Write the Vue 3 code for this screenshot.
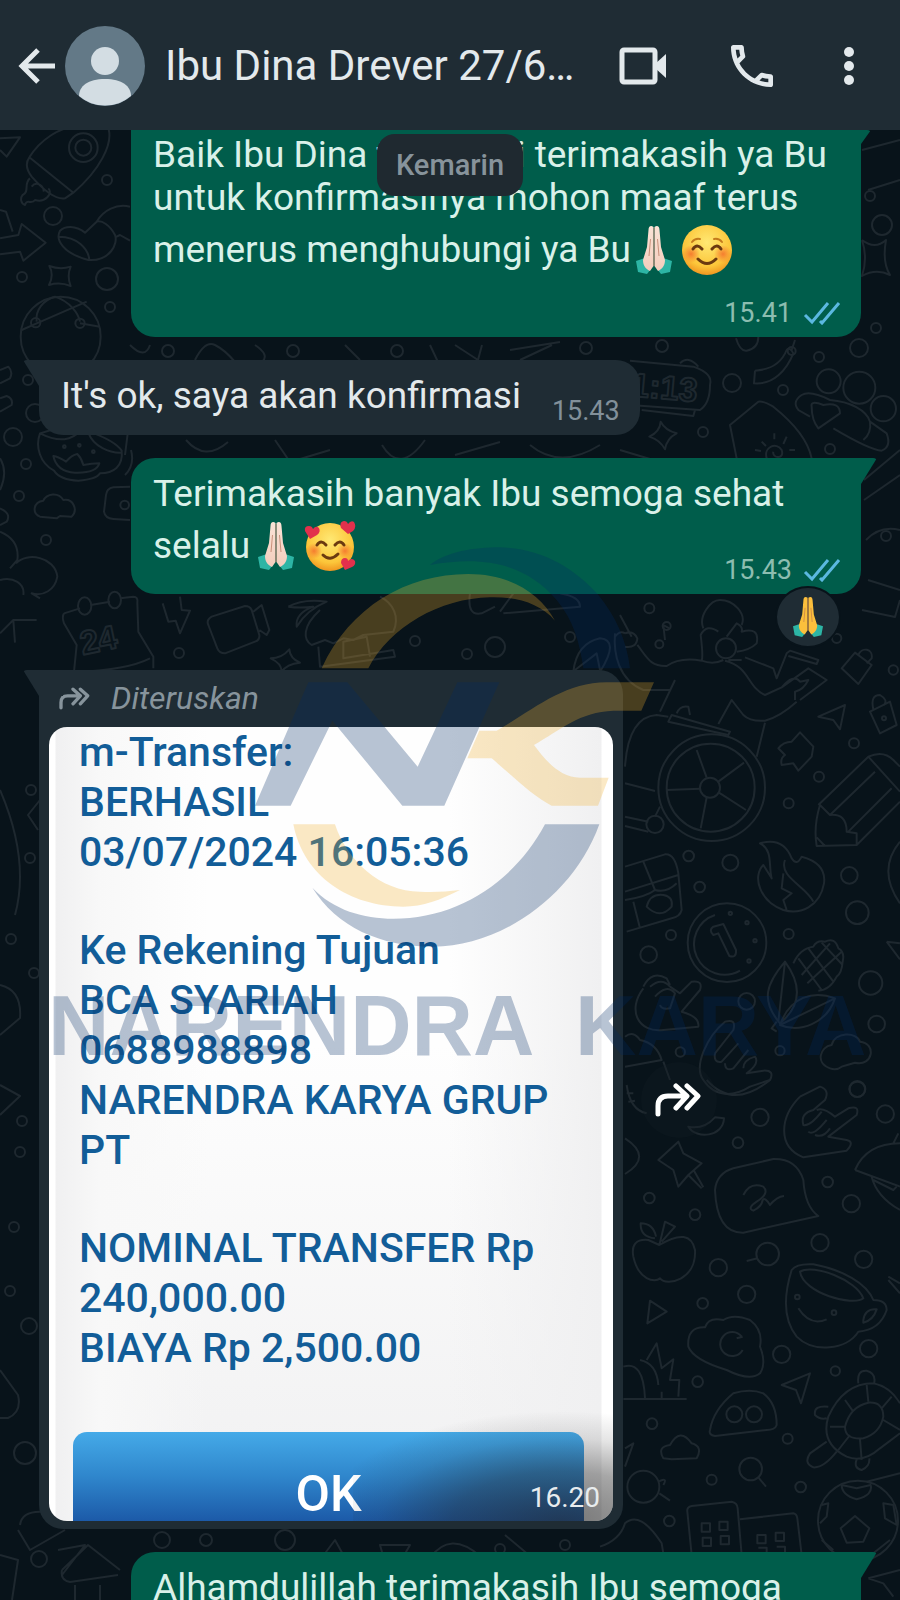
<script setup>
const receipt = [
  ['m-Transfer:', 'BERHASIL', '03/07/2024 16:05:36'],
  ['Ke Rekening Tujuan', 'BCA SYARIAH', '0688988898', 'NARENDRA KARYA GRUP', 'PT'],
  ['NOMINAL TRANSFER Rp', '240,000.00', 'BIAYA Rp 2,500.00'],
]

const rings = [
  [22, 277, 5], [53, 216, 9], [107, 180, 5], [107, 279, 11], [110, 307, 5], [28, 380, 5], [35, 413, 9],
  [13, 437, 9], [26, 464, 5], [19, 496, 5], [46, 540, 5], [168, 351, 6], [293, 351, 6], [397, 351, 6],
  [586, 348, 6], [662, 346, 6], [732, 383, 9], [783, 390, 5], [859, 348, 9], [819, 357, 5], [703, 432, 5],
  [830, 449, 5], [882, 225, 10], [870, 196, 5], [876, 328, 5], [179, 653, 5], [415, 641, 5], [467, 654, 5], [495, 647, 10],
  [570, 637, 5], [886, 536, 5], [31, 790, 5], [30, 858, 5], [11, 939, 5], [34, 973, 5], [22, 1121, 5],
  [20, 1152, 5], [14, 1227, 5], [10, 1291, 5], [29, 1326, 8], [25, 1453, 11], [39, 1559, 8], [206, 1540, 6],
  [565, 1545, 5], [500, 1549, 5], [162, 1540, 8], [285, 1540, 10],
]
</script>

<template>
  <div class="screen">
    <svg class="defs" width="0" height="0" aria-hidden="true">
      <defs>
        <linearGradient id="skin" x1="0" x2="0" y1="0" y2="1">
          <stop offset="0" stop-color="#fbe3d6" />
          <stop offset="1" stop-color="#f3cdbd" />
        </linearGradient>
        <radialGradient id="face" cx=".5" cy=".35" r=".68">
          <stop offset="0" stop-color="#ffe873" />
          <stop offset=".7" stop-color="#fcc63a" />
          <stop offset="1" stop-color="#ee8e1c" />
        </radialGradient>
        <radialGradient id="blush">
          <stop offset="0" stop-color="#f4702c" stop-opacity=".85" />
          <stop offset="1" stop-color="#f4702c" stop-opacity="0" />
        </radialGradient>
        <symbol id="hands" viewBox="0 0 36 50">
          <path d="M0 36 L9 33 L15 44 L11 49 L2 47 Z M36 36 L27 33 L21 44 L25 49 L34 47 Z" fill="#2db5a5" />
          <path class="palm" d="M17.500 2 C15 0 12.500 1 12.500 5 L11 22 L7 35 C7 41 10 44 14 46 L17.500 41 Z" />
          <path class="palm" d="M18.500 2 C21 0 23.500 1 23.500 5 L25 22 L29 35 C29 41 26 44 22 46 L18.500 41 Z" />
          <path d="M18 3 V41 M14.500 14 L13 31 M21.500 14 L23 31" fill="none" stroke="#b06a50" stroke-width="1" opacity=".65" />
        </symbol>
        <symbol id="tick" viewBox="0 0 38 24">
          <path d="M2 14 L9 21 L25 2 M17 20 L19 22 L36 2" fill="none" stroke="#5bb8e0" stroke-width="3" />
        </symbol>
        <symbol id="forward" viewBox="0 0 48 34">
          <path d="M3 31 V23 Q3 13 13 13 H31 M21 3 L32 13 L21 25 M32 3 L43 13 L32 25" fill="none" stroke="currentColor" stroke-width="5" stroke-linecap="round" stroke-linejoin="round" />
        </symbol>
      </defs>
    </svg>

    <header class="bar">
      <button class="icon back" aria-label="Kembali">
        <svg width="38" height="38" viewBox="0 0 38 38"><path d="M37 19 H4 M20 3 L4 19 L20 35" fill="none" stroke="currentColor" stroke-width="5" /></svg>
      </button>
      <svg class="avatar" width="80" height="80" viewBox="0 0 80 80" aria-hidden="true">
        <circle cx="40" cy="40" r="40" fill="#637987" />
        <circle cx="40" cy="35" r="14" fill="#d3dde3" />
        <path d="M14 70 C14 60 23 53 40 53 S66 60 66 70 A40 40 0 0 1 14 70 Z" fill="#d3dde3" />
      </svg>
      <h1 class="name">Ibu Dina Drever 27/6…</h1>
      <button class="icon video" aria-label="Panggilan video">
        <svg width="48" height="40" viewBox="0 0 48 40"><rect x="3" y="4" width="33" height="32" rx="2" fill="none" stroke="currentColor" stroke-width="5" /><path d="M36 18 L47 8 V32 L36 22 Z" fill="currentColor" /></svg>
      </button>
      <button class="icon call" aria-label="Panggilan suara">
        <svg width="42" height="42" viewBox="3 3 18 18"><path d="M6.54 5c.06.89.21 1.76.45 2.59l-1.2 1.2c-.41-1.2-.67-2.47-.76-3.79h1.51m9.86 12.02c.85.24 1.72.39 2.6.45v1.49c-1.32-.09-2.59-.35-3.8-.75l1.2-1.19M7.5 3H4c-.55 0-1 .45-1 1 0 9.390 7.610 17 17 17 .55 0 1-.45 1-1v-3.490c0-.55-.45-1-1-1-1.240 0-2.450-.2-3.570-.57-.1-.04-.21-.05-.31-.05-.26 0-.51.1-.71.290l-2.200 2.200c-2.830-1.450-5.150-3.760-6.590-6.590l2.200-2.200c.28-.28.36-.67.25-1.020C8.700 6.450 8.500 5.250 8.500 4c0-.55-.45-1-1-1z" /></svg>
      </button>
      <button class="icon more" aria-label="Menu">
        <svg width="12" height="38" viewBox="0 0 12 38"><circle cx="6" cy="5" r="5" /><circle cx="6" cy="19" r="5" /><circle cx="6" cy="33" r="5" /></svg>
      </button>
    </header>

    <main class="chat">
      <svg class="wall" viewBox="0 130 900 1470" preserveAspectRatio="xMidYMin slice" aria-hidden="true">
        <circle v-for="(r, i) in rings" :key="i" :cx="r[0]" :cy="r[1]" :r="r[2]" />
        <g transform="translate(0 120) scale(.33333)" class="thick">
          <path d="M88 112 C120 60 180 20 230 20 M88 112 L220 218 C300 150 340 70 325 25 M88 112 C75 130 80 150 95 170 C130 210 165 240 195 235 L220 218 M90 175 C70 190 90 215 68 225 C60 235 62 250 75 255 C80 235 95 255 105 240 C135 250 160 220 145 205 M95 200 C110 180 135 200 130 215" />
          <circle cx="250" cy="83" r="43" /><circle cx="250" cy="83" r="24" />
          <path d="M0 55 L60 52 L20 110 L0 90 M0 270 L18 275 L38 335 M0 355 L55 345 L65 312 L137 368 L70 422 L60 395 L0 403" />
          <path d="M180 332 C165 360 190 400 265 420 C330 425 355 370 345 345 C330 315 305 300 290 305 L255 338 C225 315 195 318 180 332 Z M178 350 C230 350 265 385 268 420 M290 305 C310 270 350 250 390 260 M345 352 L360 345 L390 362" />
          <path d="M148 438 Q180 450 212 440 Q200 468 212 498 Q180 485 147 495 Q163 465 148 438 Z" />
          <circle cx="182" cy="650" r="120" /><path d="M110 605 C105 570 130 540 165 530 C210 545 235 580 240 605 M65 630 L110 610 L260 545 M240 610 L300 620" /><circle cx="107" cy="608" r="14" /><circle cx="240" cy="610" r="14" />
          <path d="M0 750 L25 740 Q40 755 30 775 L0 790 M0 835 L20 828 Q40 835 35 855 L0 875 M275 835 C300 870 310 890 290 915 C265 935 220 915 225 880 C235 855 260 850 275 835 Z M243 915 C240 880 265 870 272 895 C278 910 270 918 262 922" />
          <path d="M120 940 C160 925 210 920 245 930 L258 915 L268 935 C310 950 350 970 365 992 C370 1040 340 1060 300 1060 Q290 1078 235 1082 Q180 1080 162 1052 C120 1030 105 980 120 940 Z C180 970 215 960 245 930 M265 938 C280 980 330 1000 365 998 M160 1008 Q175 1010 198 1025 Q215 1005 232 1002 Q245 1015 250 1035 Q275 1030 298 1030 Q290 1060 225 1058 Q170 1055 160 1008 Z" />
          <circle cx="193" cy="980" r="4" /><circle cx="238" cy="976" r="4" /><circle cx="280" cy="995" r="4" />
          <path d="M120 1190 C95 1180 100 1145 130 1142 C140 1120 175 1115 190 1140 C220 1135 235 1170 215 1190 L180 1188 L170 1195 Z M390 1100 L340 1102 Q320 1105 318 1125 L312 1175 Q315 1195 340 1197 L390 1200" />
          <circle cx="374" cy="1155" r="13" /><path d="M0 1015 Q25 1055 0 1110 M0 1165 Q35 1180 20 1205 L0 1215 M0 1235 Q60 1260 52 1320 L30 1345 M48 1330 C80 1295 165 1310 172 1370 C165 1410 130 1430 95 1420 L120 1435 M0 1380 C40 1370 75 1390 70 1425 M0 1540 L40 1500 L110 1500 M40 1500 L45 1568" />
        </g>
        <g transform="translate(0 590) scale(.33333)" class="thick">
          <path d="M192 70 L240 55 M272 45 L330 35 M360 25 L400 20 Q415 20 412 40 L415 125 L460 200 V235 M192 70 Q185 80 192 100 L230 165 L222 245 M235 245 Q380 240 450 205" />
          <ellipse cx="254" cy="48" rx="20" ry="26" /><ellipse cx="344" cy="30" rx="19" ry="25" />
          <text x="248" y="195" transform="rotate(-12 248 195)">24</text>
          <path d="M488 40 L505 95 L527 92 L540 130 L570 62 L545 60 L540 20 M625 105 Q618 90 635 80 L735 48 Q750 48 755 60 L778 135 Q780 150 765 155 L675 190 Q658 190 652 175 Z M760 65 L785 45 L808 120 L800 135 L778 120" />
          <path d="M812 205 Q845 205 868 178 Q870 205 900 218 Q860 222 845 245 Q845 220 812 205 Z M865 50 Q910 25 980 35 Q920 60 890 110 Q885 70 940 50 Q900 55 865 50 M960 60 C905 110 910 150 935 165 L975 150 L1000 160 L1030 145 L1060 150 L1090 135 L1180 125 C1200 80 1180 40 1140 20 M955 170 L960 230 L1185 200 L1180 180 L1030 205 V155 L1100 140 L1110 200" />
          <path d="M1410 10 Q1400 80 1445 70 L1485 50 M1500 65 L1540 10 M1510 70 L1740 50 Q1740 20 1680 10 M1720 245 Q1730 160 1800 145 Q1860 150 1800 245 M1725 240 L1790 190 L1800 240" />
        </g>
        <g transform="translate(630 330) scale(.33333)" class="thick">
          <path d="M0 92 L190 110 Q250 130 240 165 Q240 220 210 240 L0 225 M150 100 Q175 75 205 110 M35 240 L190 258 L195 240" />
          <text x="0" y="198" transform="rotate(5 0 198)">1:13</text>
          <path d="M318 25 Q330 65 350 62 Q385 55 385 20 M495 30 L485 60 M375 122 L372 160 C430 165 470 120 490 70 Q480 50 470 60 C450 110 410 120 375 122" />
          <circle cx="485" cy="63" r="12" />
          <path d="M92 275 Q105 300 140 310 Q110 325 105 358 Q90 330 58 320 Q90 305 92 275 Z M320 385 L300 285 L385 215 Q400 212 430 230 Q530 310 545 385 M395 335 L408 348 M433 310 V328 M470 320 L460 342 M375 360 L393 363 M478 360 H495 M410 385 C400 350 440 335 455 360 C465 390 425 385 430 365" />
          <circle cx="596" cy="154" r="36" /><circle cx="688" cy="173" r="48" /><circle cx="760" cy="236" r="38" />
          <path d="M540 260 L505 240 Q485 215 515 195 Q540 180 600 210 C660 215 710 240 720 275 L770 310 Q785 350 755 362 Q720 360 610 295 M720 275 Q725 310 700 330 M545 230 Q540 210 580 225 Q630 215 630 250 L565 295 Q545 270 545 230 Z" />
        </g>
        <g transform="translate(600 600) scale(.33333)" class="thick">
          <path d="M60 45 L95 110 M45 100 C40 160 55 240 130 270 L210 270 M45 110 Q60 90 75 100 M75 100 Q100 90 112 115 Q110 145 75 140 M112 135 C140 170 150 200 200 198 Q240 170 305 182 M225 240 L180 335 M190 75 L195 120 M190 75 L208 85" />
          <circle cx="178" cy="133" r="12" /><circle cx="200" cy="78" r="12" /><circle cx="378" cy="145" r="30" />
          <path d="M310 85 C295 50 330 0 360 0 C400 0 440 40 425 75 M355 95 Q320 70 302 105 Q310 170 305 182 Q340 195 370 180 M380 110 L410 70 Q430 80 425 95 Q480 80 470 130 Q450 150 410 155 M385 180 L425 180 M435 172 L520 205 L530 235 L560 160 L570 152 L655 180 L650 192 L565 168 M375 182 C450 200 440 260 495 285 L545 262 L625 205 L680 240 L600 300 M545 262 Q580 220 600 245 L625 240 Q610 270 585 275 L585 300 M355 372 L395 300 L430 345 Q450 365 495 362 Q540 350 590 305 M495 368 L470 470 M215 345 L390 395 L385 405 L205 365 Z M230 340 Q240 315 265 320 L270 345 M75 500 Q85 350 170 345 L205 350 M75 550 L165 573 M75 650 L145 665 M75 678 L145 695 M165 650 L180 620" />
          <circle cx="335" cy="563" r="160" /><circle cx="332" cy="563" r="132" /><circle cx="330" cy="563" r="30" /><circle cx="165" cy="673" r="26" />
          <path d="M290 450 L320 533 M355 545 L432 488 M357 578 L438 630 M320 592 L302 685 M300 566 L200 570" />
          <path d="M725 205 L765 158 L815 195 L775 252 Z M775 165 C785 140 820 145 815 175 L800 190 M655 350 L735 315 L720 388 L700 360 Z M810 335 L870 305 L890 375 L840 400 Z M820 328 Q810 285 840 285 Q865 300 852 315 M600 397 L640 440 L635 470 L595 512 L580 490 L545 495 Q540 475 555 465 L535 445 Q550 425 575 425 Z" />
          <circle cx="852" cy="355" r="6" /><circle cx="880" cy="210" r="14" /><circle cx="762" cy="430" r="15" /><circle cx="657" cy="530" r="15" /><circle cx="566" cy="610" r="15" /><circle cx="710" cy="115" r="14" /><circle cx="148" cy="25" r="15" />
          <path d="M655 615 L805 470 Q850 450 880 480 L900 500 M805 470 L900 575 M825 515 L690 645 M875 565 L745 695 M900 605 L770 735 L650 738 Q640 680 660 615 L690 645 Q740 640 740 695 L770 700 V735 M650 712 L675 738" />
          <path d="M480 730 Q550 710 575 775 Q590 800 605 770 Q680 790 672 850 C660 920 600 945 550 930 C480 905 455 830 490 795 L515 835 C505 800 520 750 480 730 Z M555 780 C535 830 620 860 640 905 M550 820 L545 865 L575 880 L550 900 L560 930" />
          <path d="M75 800 L195 763 Q225 760 235 820 L245 930 Q240 950 215 955 L80 995 M75 875 L235 825 M130 785 L165 870 M75 900 Q140 890 165 870 Q200 880 230 850 M100 905 L120 985 M140 920 Q180 960 215 920 Q220 890 190 885 Q150 880 140 920 Z" />
          <circle cx="266" cy="768" r="16" /><circle cx="391" cy="788" r="24" /><circle cx="299" cy="861" r="16" /><circle cx="748" cy="826" r="25" /><circle cx="772" cy="938" r="34" /><circle cx="566" cy="1002" r="15" /><circle cx="213" cy="1005" r="15" /><circle cx="146" cy="1064" r="25" /><circle cx="812" cy="1149" r="35" /><circle cx="830" cy="1272" r="25" /><circle cx="440" cy="1204" r="25" /><circle cx="241" cy="1356" r="14" /><circle cx="540" cy="1352" r="14" /><circle cx="772" cy="1468" r="23" />
          <circle cx="381" cy="1028" r="118" /><path d="M420 1112 A92 92 0 1 1 345 945 M340 980 L370 972 L408 1050 Q410 1075 388 1068 L355 1000 L340 1005 Q325 990 340 980 Z" />
          <circle cx="391" cy="940" r="5" /><circle cx="441" cy="968" r="5" /><circle cx="465" cy="1022" r="5" /><circle cx="447" cy="1083" r="5" />
          <path d="M900 725 Q830 810 900 910 M860 1025 L900 1030 M860 1025 L900 1078" />
          <path d="M580 1090 Q600 1045 640 1040 Q650 1020 675 1025 Q705 1010 715 1045 Q735 1055 728 1085 Q725 1120 710 1130 Q690 1170 655 1172 M595 1075 L665 1170 M625 1045 L700 1145 M665 1028 L728 1095 M605 1125 L690 1030 M622 1150 L725 1055 M555 1085 C500 1150 480 1200 540 1270 C600 1220 610 1160 555 1085 Z L535 1265 M540 1275 C570 1190 640 1170 705 1195 C680 1270 600 1300 540 1275 L705 1195 M530 1265 L515 1285 L530 1295" />
          <path d="M130 1160 Q155 1110 200 1135 L210 1155 M150 1160 Q185 1130 210 1160 M165 1190 Q200 1150 225 1180 L210 1225 Q185 1230 180 1215 M130 1165 C80 1230 115 1300 190 1290 L295 1280 Q300 1250 245 1235 L300 1170 Q310 1140 275 1145 L240 1180 L210 1160" />
          <path d="M345 1360 L400 1290 Q410 1255 375 1265 C320 1310 280 1400 310 1440 C350 1500 410 1485 450 1460 L510 1440 Q525 1410 490 1412 L440 1420 Q480 1390 465 1370 Q430 1380 430 1405 M345 1360 Q340 1390 365 1385 L415 1330 M375 1390 Q375 1415 400 1405 L445 1350" />
          <path d="M690 1405 C645 1390 660 1340 695 1335 C705 1295 770 1295 780 1325 C830 1330 820 1400 765 1388 Q740 1395 725 1400 Q710 1412 690 1405 Z M75 1310 Q100 1290 120 1320 Q170 1330 185 1380 L75 1400 M190 1385 L210 1440" />
        </g>
        <g transform="translate(600 1080) scale(.33333)" class="thick">
          <path d="M320 0 Q400 90 510 0 M80 15 Q90 90 140 100 M80 40 H100 M85 65 L105 62 M345 112 L372 115 C370 170 290 180 265 140 Q310 150 345 112 Z M75 175 Q160 230 75 282" />
          <path d="M175 240 L235 185 L250 220 L305 250 L265 285 L235 320 L220 270 Z M265 285 L305 325 M282 272 L310 322" />
          <path d="M345 330 Q350 280 400 265 L520 237 Q590 235 610 300 Q615 380 655 408 L430 458 Q350 460 345 330 Z M430 345 Q450 305 490 320 Q510 340 470 365 Q440 385 460 392 Q485 380 488 360 Q495 350 510 375 Q530 350 552 348" />
          <path d="M600 50 L660 20 Q690 30 675 60 L640 90 Q600 100 610 135 Q630 140 665 95 M600 50 C540 110 530 200 610 232 L740 212 Q765 185 740 180 L685 170 L770 105 Q780 75 745 85 L705 110 Q670 80 650 90 M625 155 Q640 170 680 120 M645 165 Q670 175 690 145" />
          <path d="M765 270 Q800 190 900 190 M765 270 L900 320 M815 290 Q830 350 900 390 M820 300 L880 330 L890 320 M880 190 L895 160" />
          <path d="M178 495 L145 480 Q90 475 100 530 C115 600 165 610 180 595 C200 620 290 600 285 510 Q270 440 178 495 Z M178 495 L195 425 L225 440 L185 485 M165 475 Q120 470 122 430 Q160 430 168 470 M150 662 L200 695 L142 730 Z" />
          <circle cx="503" cy="522" r="34" /><path d="M440 543 L472 535" /><circle cx="355" cy="563" r="26" /><circle cx="440" cy="643" r="26" /><circle cx="308" cy="670" r="16" /><circle cx="660" cy="488" r="26" /><circle cx="791" cy="538" r="26" /><circle cx="754" cy="371" r="26" /><circle cx="683" cy="306" r="16" /><circle cx="480" cy="112" r="26" /><circle cx="414" cy="188" r="16" /><circle cx="148" cy="354" r="16" /><circle cx="285" cy="404" r="16" /><circle cx="772" cy="27" r="24" /><circle cx="856" cy="102" r="26" /><circle cx="545" cy="823" r="26" /><circle cx="806" cy="806" r="26" /><circle cx="706" cy="873" r="14" /><circle cx="293" cy="905" r="16" /><circle cx="156" cy="1031" r="16" /><circle cx="563" cy="1076" r="15" /><circle cx="335" cy="1199" r="15" /><circle cx="602" cy="1221" r="16" /><circle cx="208" cy="1323" r="16" />
          <path d="M575 570 Q590 550 640 553 C730 570 800 610 820 660 Q860 660 860 690 Q840 750 775 755 C740 810 640 820 590 770 C550 720 550 650 575 570 Z M600 575 C640 550 770 600 790 655 C760 680 610 640 600 575 Z M790 720 Q795 685 830 688 Q820 720 790 728 Z M595 685 Q630 740 680 718" />
          <circle cx="592" cy="651" r="7" /><circle cx="702" cy="698" r="7" /><path d="M865 590 L900 610 M865 600 L900 640" />
          <path d="M265 800 Q260 740 315 742 Q325 710 370 720 Q400 700 450 720 Q490 750 480 800 Q500 850 480 880 Q450 905 380 870 Q280 840 265 800 Z M425 770 A36 36 0 1 0 428 810 M410 775 L428 770" />
          <path d="M70 957 H260 M70 860 Q130 840 135 955 M120 840 Q170 850 175 915 M140 840 L170 790 L185 865 L220 838 L210 900 L238 900 L235 950 M185 935 V955 M545 915 L630 880 L603 970 L588 930 Z" />
          <path d="M330 1050 Q340 990 400 940 Q450 925 490 940 Q530 970 530 1035 Q525 1050 500 1050 L345 1068 Q325 1065 330 1050 Z" /><circle cx="403" cy="1003" r="24" /><circle cx="462" cy="1003" r="24" />
          <path d="M190 1135 Q170 1100 210 1095 Q240 1040 275 1090 Q310 1100 290 1135 L215 1138 Z M475 1192 L498 1220 M178 1240 L210 1262 M175 1205 Q205 1190 190 1215" />
          <circle cx="452" cy="1167" r="34" /><circle cx="130" cy="1220" r="48" />
          <path d="M685 1010 Q730 910 820 910 Q870 920 900 970 M685 1010 Q660 1090 740 1130 Q790 1150 840 1105 L900 1060 M735 1040 Q750 980 805 968 Q850 965 850 1010 Q840 1060 790 1075 Q735 1080 735 1040 Z M800 915 L805 965 M735 960 L760 995 M845 985 L875 950 M850 1020 L900 1050 M690 1040 L735 1040 M715 1110 L750 1065 M785 1140 L780 1078 M775 910 Q770 870 800 872 Q830 880 822 912 M685 980 Q640 975 645 1005 Q660 1020 680 1015 M680 1085 L630 1120 Q610 1150 640 1162 Q670 1165 710 1115 M770 1138 Q760 1165 785 1170 Q810 1160 808 1135" />
          <circle cx="774" cy="1322" r="120" /><path d="M765 1308 L808 1345 L790 1385 L740 1388 L722 1345 Z M725 1215 L770 1225 L812 1215 Q820 1245 770 1258 Q725 1245 725 1215 M850 1270 L880 1275 L890 1335 L855 1315 Z M665 1275 L685 1270 L680 1310 L660 1330 M665 1380 L700 1410 M820 1420 L870 1380 M800 1205 L900 1180" />
          <path d="M275 1425 L262 1295 Q260 1280 275 1278 L395 1265 Q412 1268 413 1285 L425 1425 M420 1318 L580 1300 Q590 1302 592 1315 L605 1425 M305 1330 h25 v25 h-25 z M358 1325 h25 v25 h-25 z M308 1373 h25 v25 h-25 z M362 1368 h25 v25 h-25 z M472 1365 h25 v25 h-25 z M527 1358 h25 v25 h-25 z M475 1403 h25 v20 M530 1400 h25 v20 M0 1400 Q60 1380 75 1330 Q120 1290 185 1390 L190 1420 M75 1105 L100 1090 L75 1160 M805 1495 L900 1470 M805 1495 L850 1510 L880 1550" />
        </g>
        <path d="M0 790 Q30 860 15 915 M40 800 L28 815 L38 830 M0 985 Q22 990 20 1018 L0 1035 M0 1085 L20 1096 L0 1115 M0 1370 L18 1395 Q22 1412 8 1418 L0 1418 M20 1525 Q22 1510 45 1512 M18 1530 L30 1550 L65 1530 M0 1555 L18 1560 L12 1600 M62 1570 L88 1545 L120 1570 M62 1570 Q60 1580 70 1582 L118 1575 M75 1600 V1585 M100 1600 V1585 M58 1550 L85 1545 L62 1575" />
        <path d="M130 345 Q145 360 150 345 M195 360 Q205 340 215 345 T235 362 M255 345 Q270 355 262 362 M345 345 L360 360 M430 345 L438 362 M455 345 L478 360 L482 345 M510 350 L560 342 M520 360 L552 345 M186 440 Q205 462 228 442 M275 440 L290 462 L330 450 M382 445 Q400 475 425 440 M455 455 L500 442 M530 445 Q560 470 600 445 M620 450 L660 462 M320 1560 L335 1540 L345 1558 M380 1545 h30 l-8 14 h-18 z M430 1558 Q450 1530 480 1556 M505 1535 L530 1556 M125 455 L130 415 M125 475 Q135 465 131 450" />
        <path d="M862 150 L900 140 M868 190 L900 180 M862 240 Q875 250 886 240 Q882 262 890 275 Q876 268 862 276 Q868 258 862 240 M866 540 Q880 525 900 530 M868 580 L900 590 M864 480 L900 450 M864 500 L900 475 M862 610 L895 617 L900 600" />
      </svg>

      <div class="log">
        <article class="bubble out first">
          <p class="text">Baik Ibu Dina tidak lagi terimakasih ya Bu untuk konfirmasinya mohon maaf terus menerus menghubungi ya Bu<svg class="emoji light" width="46" height="50" viewBox="0 0 46 50" role="img" aria-label="🙏🏻"><use href="#hands" x="5" y="0" width="36" height="50" /></svg><svg class="emoji" width="52" height="50" viewBox="0 0 50 50" role="img" aria-label="☺️">
            <circle cx="25" cy="25" r="25" fill="url(#face)" /><circle cx="9" cy="29" r="9" fill="url(#blush)" /><circle cx="41" cy="29" r="9" fill="url(#blush)" />
            <path d="M11 24 Q15 18 20 24 M30 24 Q35 18 39 24 M16 34 Q25 43 34 34" fill="none" stroke="#6b3a10" stroke-width="3" stroke-linecap="round" /><path d="M10 17 Q13 13 18 14 M32 14 Q37 13 40 17" fill="none" stroke="#c47a1c" stroke-width="2" stroke-linecap="round" /></svg></p>
          <div class="meta">15.41 <svg width="38" height="24"><use href="#tick" /></svg></div>
        </article>

        <article class="bubble in short">
          <p class="text">It's ok, saya akan konfirmasi</p>
          <div class="meta">15.43</div>
        </article>

        <article class="bubble out reacted">
          <p class="text">Terimakasih banyak Ibu semoga sehat selalu<svg class="emoji light" width="50" height="50" viewBox="0 0 50 50" role="img" aria-label="🙏🏻"><use href="#hands" x="8" y="0" width="36" height="50" /></svg><svg class="emoji" width="52" height="50" viewBox="0 0 50 50" role="img" aria-label="🥰">
            <circle cx="25" cy="26" r="24" fill="url(#face)" /><circle cx="9" cy="30" r="8" fill="url(#blush)" /><circle cx="40" cy="30" r="8" fill="url(#blush)" />
            <path d="M12 24 Q16 18 21 24 M30 24 Q35 18 39 24 M18 34 Q25 41 33 33" fill="none" stroke="#6b3a10" stroke-width="3" stroke-linecap="round" />
            <g fill="#e2304c"><path d="M5 18 L0 10 Q-1 5 4 5 Q7 5 8 8 Q11 4 14 7 Q16 11 12 14 Z" /><path d="M43 13 L36 7 Q34 1 39 0 Q42 0 43 3 Q46 -1 49 1 Q52 6 48 10 Z" /><path d="M40 49 L36 42 Q36 37 40 37 Q43 37 43 40 Q47 36 50 40 Q51 44 47 46 Z" /></g></svg></p>
          <div class="meta tuck">15.43 <svg width="38" height="24"><use href="#tick" /></svg></div>
          <button class="reaction" aria-label="Reaksi 🙏"><svg class="gold" width="30" height="42" viewBox="0 0 36 50"><use href="#hands" /></svg></button>
        </article>

        <div class="line">
          <article class="bubble in forwarded">
            <div class="label"><svg width="32" height="23"><use href="#forward" /></svg><em>Diteruskan</em></div>
            <div class="photo">
              <div class="receipt">
                <p v-for="(group, i) in receipt" :key="i"><span v-for="row in group" :key="row">{{ row }}</span></p>
              </div>
              <button class="ok">OK</button>
              <time class="stamp">16.20</time>
            </div>
          </article>
          <button class="share" aria-label="Teruskan"><svg width="48" height="34"><use href="#forward" /></svg></button>
        </div>

        <article class="bubble out">
          <p class="text">Alhamdulillah terimakasih Ibu semoga sehat selalu</p>
        </article>
      </div>

      <div class="day">Kemarin</div>
    </main>

    <svg class="mark" viewBox="0 530 900 540" role="img" aria-label="Narendra Karya">
      <g transform="translate(240 530) scale(.33333)">
        <path class="navy" d="M570 105 C620 65 700 52 780 52 C900 55 1000 110 1075 195 C1125 255 1160 330 1170 415 H1030 C1020 340 1000 270 950 210 C860 105 740 75 570 105 Z" />
        <path class="gold-fill" d="M245 415 C330 230 500 132 685 132 C810 132 900 190 945 272 C900 220 830 200 750 202 C600 205 450 290 385 415 Z" />
        <path class="navy" d="M45 827 L205 457 H322 L533 710 L652 457 H778 L613 827 H487 L277 572 L152 827 Z" />
        <path class="gold-fill" d="M718 602 H770 C880 540 970 457 1100 457 H1242 L1204 542 H1120 C1020 545 960 600 882 645 C915 690 960 743 1020 743 H1106 L1074 827 H935 C880 800 820 740 755 685 H682 Z" />
        <path class="gold-fill" d="M160 883 H285 C320 990 420 1085 540 1085 C580 1087 620 1085 660 1080 C600 1110 550 1130 490 1130 C330 1130 190 1040 160 883 Z" />
        <path class="navy" d="M217 1073 C280 1140 370 1166 460 1166 C650 1166 820 1060 915 883 H1078 C1000 1100 780 1250 580 1250 C420 1250 290 1190 217 1073 Z" />
      </g>
      <text class="navy" x="48" y="1055">NARENDRA</text>
      <text class="navy" x="575" y="1055">KARYA</text>
    </svg>
  </div>
</template>

<style>
body {
  margin: 0;
  background: #08131a;
}
</style>

<style scoped>
.screen {
  position: relative;
  display: flex;
  flex-direction: column;
  height: 100vh;
  overflow: hidden;
  background: #08131a;
  color: #e3e9ec;
  font-family: Roboto, "Liberation Sans", sans-serif;
}
.defs {
  position: absolute;
}
button {
  padding: 0;
  border: 0;
  background: none;
  color: inherit;
  font: inherit;
}
p, h1 {
  margin: 0;
  font-weight: 400;
}
svg {
  flex: none;
}
.bar {
  display: flex;
  flex: none;
  align-items: center;
  height: 130px;
  padding: 2px 45px 0 18px;
  box-sizing: border-box;
  background: #1f2c34;
}
.icon {
  display: flex;
  flex: none;
  fill: currentColor;
}
.avatar {
  margin-left: 9px;
}
.name {
  flex: 1;
  margin-left: 20px;
  overflow: hidden;
  font-size: 42px;
  line-height: 52px;
  white-space: nowrap;
}
.call {
  margin-left: 64px;
}
.more {
  margin-left: 70px;
}
.chat {
  position: relative;
  flex: 1;
  min-height: 0;
  overflow: hidden;
}
.wall {
  position: absolute;
  inset: 0;
  width: 100%;
  height: 100%;
  fill: none;
  stroke: #1e282f;
  stroke-width: 2;
  stroke-linejoin: round;
}
.wall .thick {
  stroke-width: 6;
}
.wall text {
  font-family: "Liberation Sans", sans-serif;
  font-size: 100px;
  font-weight: 700;
}
.log {
  position: relative;
  display: flex;
  flex-direction: column;
  gap: 23px;
  padding: 0 39px;
}
.bubble {
  position: relative;
  border-radius: 24px;
  font-size: 37px;
  line-height: 43px;
}
.bubble::before {
  content: "";
  position: absolute;
  top: 0;
  width: 40px;
  height: 26px;
  background: inherit;
}
.out {
  margin-left: 92px;
  padding: 14px 20px 8px 22px;
  border-top-right-radius: 0;
  background: #005d4b;
  color: #d9f1e9;
}
.out::before {
  right: -16px;
  border-radius: 0 4px 0 0;
  clip-path: polygon(0 0, 100% 0, 60% 100%, 0 100%);
}
.in {
  border-top-left-radius: 0;
  background: #1f2c34;
}
.in::before {
  left: -16px;
  border-radius: 4px 0 0 0;
  clip-path: polygon(0 0, 100% 0, 100% 100%, 40% 100%);
}
.first {
  padding-top: 3px;
  border-top-left-radius: 0;
}
.first::before {
  right: -10px;
  height: 14px;
  clip-path: polygon(0 0, 100% 0, 75% 100%, 0 100%);
}
.emoji {
  margin: 6px 0 0 4px;
  vertical-align: -13px;
}
.emoji.light {
  margin-left: 0;
}
.palm {
  fill: var(--hand, url(#skin));
}
.gold {
  --hand: #fcbf3c;
}
.meta {
  display: flex;
  align-items: center;
  justify-content: flex-end;
  gap: 11px;
  margin-top: 22px;
  color: #8dbdb0;
  font-size: 27px;
  line-height: 32px;
}
.tuck {
  margin-top: -17px;
}
.short {
  display: flex;
  align-self: flex-start;
  align-items: flex-end;
  gap: 31px;
  padding: 14px 20px 8px 22px;
}
.short .text {
  margin-bottom: 10px;
}
.short .meta {
  margin: 0;
  color: #82909a;
}
.reacted {
  margin-bottom: 53px;
}
.reaction {
  position: absolute;
  right: 20px;
  bottom: -54px;
  display: flex;
  align-items: center;
  justify-content: center;
  width: 66px;
  height: 62px;
  border: 2px solid #08131a;
  border-radius: 50%;
  background: #1f2c34;
}
.line {
  display: flex;
  align-items: center;
  gap: 18px;
}
.forwarded {
  width: 564px;
  padding: 10px 10px 8px;
}
.label {
  display: flex;
  align-items: center;
  gap: 20px;
  padding: 0 10px;
  margin-bottom: 11px;
  color: #87949c;
  font-size: 32px;
  line-height: 36px;
}
.photo {
  position: relative;
  overflow: hidden;
  border-radius: 18px;
  background: linear-gradient(90deg, #fff 6px, #f0f0f1 7px, #f8f8f8 50px, rgba(250, 250, 250, 0) 160px, rgba(250, 250, 250, 0) 400px, #f0f0f1 552px, #fff 553px), linear-gradient(#fefefe 40%, #f0f0f1);
}
.photo::after {
  content: "";
  position: absolute;
  right: 0;
  bottom: 0;
  width: 260px;
  height: 110px;
  background: radial-gradient(240px 110px at 80% 100%, rgba(35, 35, 35, .6), rgba(35, 35, 35, .4) 45%, rgba(35, 35, 35, .12) 75%, rgba(35, 35, 35, 0));
}
.receipt {
  display: flex;
  flex-direction: column;
  gap: 48px;
  padding: 0 30px;
  color: #125d98;
  font-size: 41px;
  line-height: 50px;
}
.receipt p {
  font-weight: 500;
}
.receipt span {
  display: block;
  white-space: nowrap;
}
.ok {
  display: block;
  width: calc(100% - 53px);
  height: 89px;
  margin: 59px 0 0 24px;
  padding-top: 36px;
  border-radius: 14px 14px 0 0;
  background: linear-gradient(#45aae8, #2f86cc 50%, #1c5aa8);
  color: #fff;
  font-size: 50px;
  font-weight: 500;
  line-height: 53px;
}
.stamp {
  position: absolute;
  z-index: 1;
  right: 13px;
  bottom: 7px;
  color: #e8ecee;
  font-size: 28px;
  line-height: 32px;
}
.share {
  display: flex;
  align-items: center;
  justify-content: center;
  width: 76px;
  height: 76px;
  border-radius: 50%;
  background: rgba(20, 31, 38, .3);
  color: #fff;
}
.day {
  position: absolute;
  top: 4px;
  left: 0;
  right: 0;
  width: max-content;
  margin: 0 auto;
  padding: 12px 19px;
  border-radius: 18px;
  background: #1f2930;
  color: #87939b;
  font-size: 29px;
  font-weight: 500;
  line-height: 38px;
}
.mark {
  position: absolute;
  top: 530px;
  left: 0;
  width: 100%;
  pointer-events: none;
}
.mark text {
  font: 700 85px "Liberation Sans", Arial, sans-serif;
}
.navy {
  fill: #002b65;
  fill-opacity: .28;
}
.gold-fill {
  fill: #f0b02d;
  fill-opacity: .28;
}
</style>
